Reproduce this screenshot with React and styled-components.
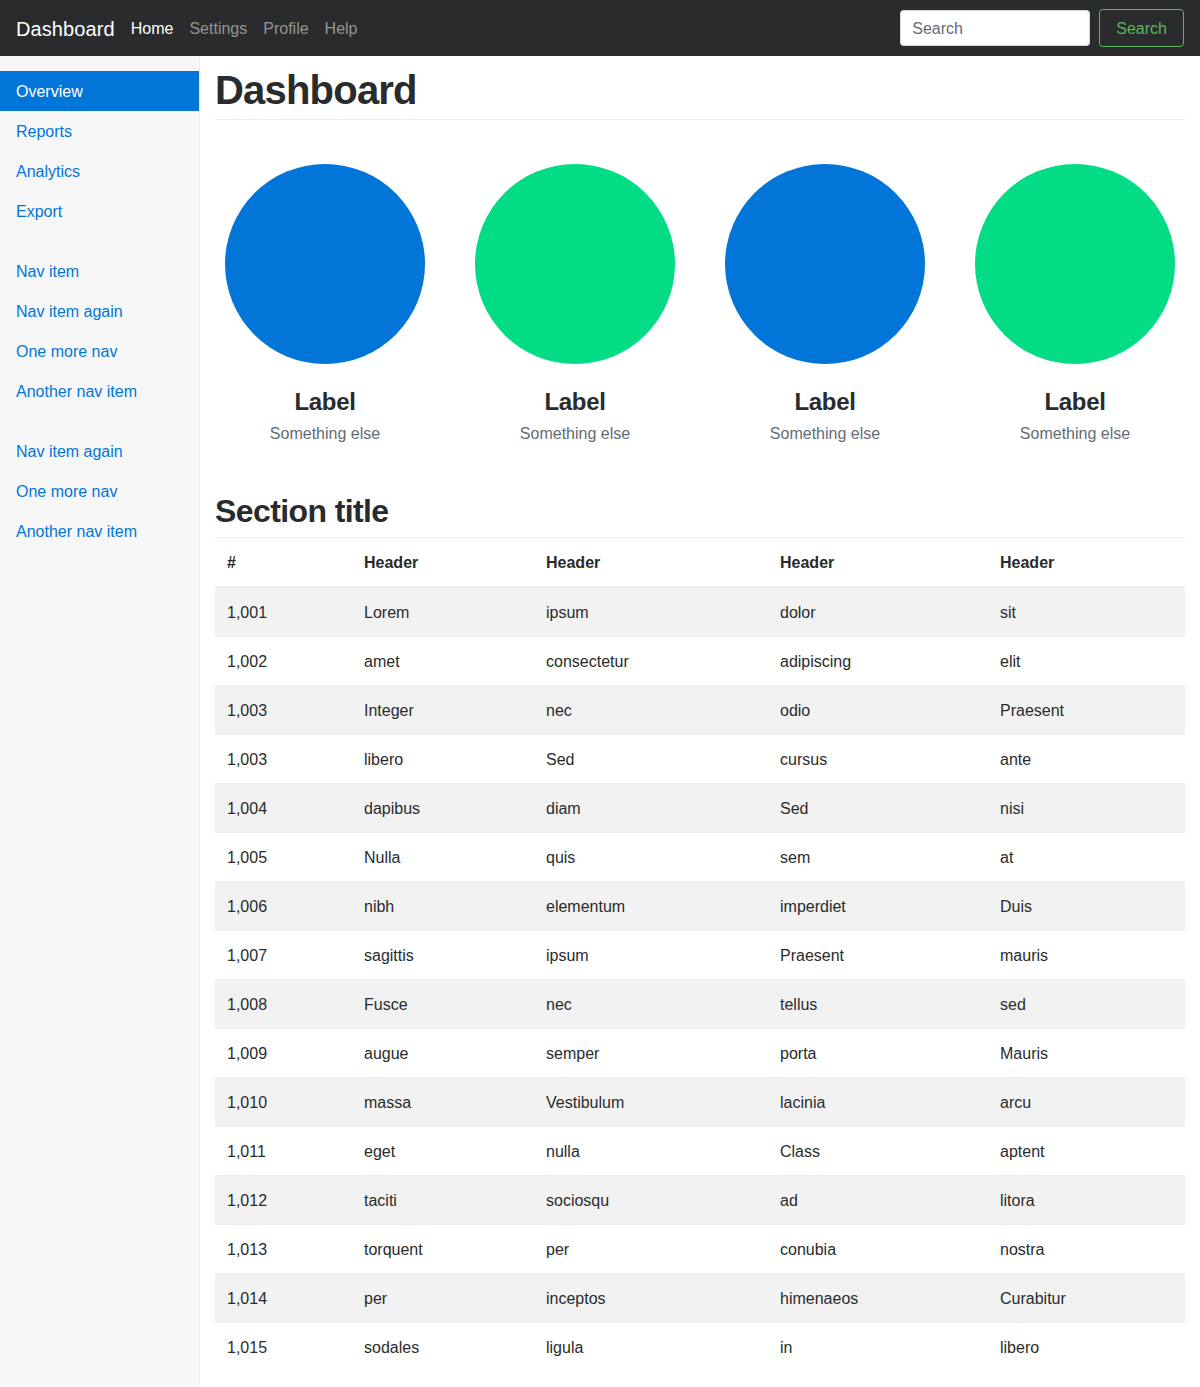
import React from "react";
import styled, { createGlobalStyle } from "styled-components";

const Global = createGlobalStyle`
  html, body { margin: 0; padding: 0; }
  body {
    font-family: "Liberation Sans", Arial, Helvetica, sans-serif;
    font-size: 16px;
    line-height: 1.5;
    color: #292b2c;
    background: #fff;
  }
  * { box-sizing: border-box; }
`;

const Navbar = styled.nav`
  height: 56px;
  background: #292b2c;
  display: flex;
  align-items: center;
  padding: 2px 16px 0;
`;

const Brand = styled.a`
  color: #fff;
  font-size: 20px;
  line-height: 30px;
  margin-right: 8px;
  letter-spacing: 0.1px;
  text-decoration: none;
`;

const NavLinks = styled.div`
  display: flex;
  flex: 1;
`;

const NavLink = styled.a`
  color: ${(p) => (p.$active ? "#fff" : "rgba(255,255,255,0.5)")};
  padding: 8px 8px;
  font-size: 16px;
  text-decoration: none;
`;

const SearchForm = styled.form`
  display: flex;
  align-items: center;
  gap: 9px;
  margin-top: -2px;
`;

const SearchInput = styled.input`
  width: 190px;
  height: 36px;
  border: 1px solid rgba(0,0,0,.15);
  border-radius: 4px;
  padding: 1px 11px 0;
  font-family: inherit;
  font-size: 16px;
  color: #464a4c;
  &::placeholder { color: #636c72; opacity: 1; }
`;

const SearchButton = styled.button`
  height: 38px;
  padding: 1px 16px 0;
  background: transparent;
  border: 1px solid #5cb85c;
  border-radius: 4px;
  color: #5cb85c;
  font-family: inherit;
  font-size: 16px;
`;

const Layout = styled.div`
  display: flex;
  min-height: calc(100vh - 56px);
`;

const Sidebar = styled.aside`
  width: 200px;
  flex-shrink: 0;
  background: #f7f7f7;
  border-right: 1px solid #eee;
  padding-top: 15px;
`;

const SideGroup = styled.ul`
  list-style: none;
  margin: 0 0 20px;
  padding: 0;
`;

const SideLink = styled.a`
  display: block;
  padding: 9px 16px 7px;
  line-height: 24px;
  color: ${(p) => (p.$active ? "#fff" : "#0275d8")};
  background: ${(p) => (p.$active ? "#0275d8" : "transparent")};
  text-decoration: none;
`;

const Main = styled.main`
  flex: 1;
  padding: 11px 15px 15px;
  min-width: 0;
`;

const PageTitle = styled.h1`
  font-size: 40px;
  font-weight: bold;
  letter-spacing: -0.8px;
  line-height: 44px;
  margin: 0 0 44px;
  padding: 1px 0 7px;
  border-bottom: 1px solid #eee;
`;

const Placeholders = styled.div`
  display: grid;
  grid-template-columns: repeat(4, 1fr);
  margin: 0 -15px 47px;
`;

const Placeholder = styled.div`
  display: flex;
  flex-direction: column;
  align-items: center;
  text-align: center;
`;

const Circle = styled.div`
  width: 200px;
  height: 200px;
  border-radius: 50%;
  background: ${(p) => p.$color};
  margin-bottom: 25px;
`;

const Label = styled.h4`
  font-size: 24px;
  font-weight: bold;
  letter-spacing: -0.3px;
  line-height: 26.4px;
  margin: 0 0 7px;
`;

const Sub = styled.span`
  color: #636c72;
  font-size: 16px;
  line-height: 24px;
`;

const SectionTitle = styled.h2`
  font-size: 32px;
  font-weight: bold;
  letter-spacing: -0.6px;
  line-height: 35px;
  margin: 0;
  padding: 1px 0 8px;
`;

const Table = styled.table`
  width: 100%;
  border-collapse: collapse;
  font-size: 16px;
`;

const Th = styled.th`
  text-align: left;
  font-weight: bold;
  padding: 13px 12px 11px;
  line-height: 24px;
  border-top: 1px solid #eceeef;
  border-bottom: 2px solid #eceeef;
`;

const Tr = styled.tr`
  background: ${(p) => (p.$striped ? "#f2f2f2" : "transparent")};
`;

const Td = styled.td`
  padding: 13px 12px 11px;
  line-height: 24px;
  border-top: 1px solid #eceeef;
`;

const rows = [
  ["1,001", "Lorem", "ipsum", "dolor", "sit"],
  ["1,002", "amet", "consectetur", "adipiscing", "elit"],
  ["1,003", "Integer", "nec", "odio", "Praesent"],
  ["1,003", "libero", "Sed", "cursus", "ante"],
  ["1,004", "dapibus", "diam", "Sed", "nisi"],
  ["1,005", "Nulla", "quis", "sem", "at"],
  ["1,006", "nibh", "elementum", "imperdiet", "Duis"],
  ["1,007", "sagittis", "ipsum", "Praesent", "mauris"],
  ["1,008", "Fusce", "nec", "tellus", "sed"],
  ["1,009", "augue", "semper", "porta", "Mauris"],
  ["1,010", "massa", "Vestibulum", "lacinia", "arcu"],
  ["1,011", "eget", "nulla", "Class", "aptent"],
  ["1,012", "taciti", "sociosqu", "ad", "litora"],
  ["1,013", "torquent", "per", "conubia", "nostra"],
  ["1,014", "per", "inceptos", "himenaeos", "Curabitur"],
  ["1,015", "sodales", "ligula", "in", "libero"],
];

const colWidths = [137, 182, 234, 220, 197];

const groups = [
  [["Overview", true], ["Reports"], ["Analytics"], ["Export"]],
  [["Nav item"], ["Nav item again"], ["One more nav"], ["Another nav item"]],
  [["Nav item again"], ["One more nav"], ["Another nav item"]],
];

const circles = ["#0275d8", "#02dc84", "#0275d8", "#02dc84"];

export default function App() {
  return (
    <>
      <Global />
      <Navbar>
        <Brand href="#">Dashboard</Brand>
        <NavLinks>
          <NavLink $active href="#">Home</NavLink>
          <NavLink href="#">Settings</NavLink>
          <NavLink href="#">Profile</NavLink>
          <NavLink href="#">Help</NavLink>
        </NavLinks>
        <SearchForm onSubmit={(e) => e.preventDefault()}>
          <SearchInput type="text" placeholder="Search" />
          <SearchButton type="submit">Search</SearchButton>
        </SearchForm>
      </Navbar>
      <Layout>
        <Sidebar>
          {groups.map((g, gi) => (
            <SideGroup key={gi}>
              {g.map(([t, a], i) => (
                <li key={i}>
                  <SideLink $active={!!a} href="#">{t}</SideLink>
                </li>
              ))}
            </SideGroup>
          ))}
        </Sidebar>
        <Main>
          <PageTitle>Dashboard</PageTitle>
          <Placeholders>
            {circles.map((c, i) => (
              <Placeholder key={i}>
                <Circle $color={c} />
                <Label>Label</Label>
                <Sub>Something else</Sub>
              </Placeholder>
            ))}
          </Placeholders>
          <SectionTitle>Section title</SectionTitle>
          <Table>
            <colgroup>
              {colWidths.map((w, i) => (
                <col key={i} style={{ width: w }} />
              ))}
            </colgroup>
            <thead>
              <tr>
                <Th>#</Th>
                <Th>Header</Th>
                <Th>Header</Th>
                <Th>Header</Th>
                <Th>Header</Th>
              </tr>
            </thead>
            <tbody>
              {rows.map((r, i) => (
                <Tr key={i} $striped={i % 2 === 0}>
                  {r.map((c, j) => (
                    <Td key={j}>{c}</Td>
                  ))}
                </Tr>
              ))}
            </tbody>
          </Table>
        </Main>
      </Layout>
    </>
  );
}
